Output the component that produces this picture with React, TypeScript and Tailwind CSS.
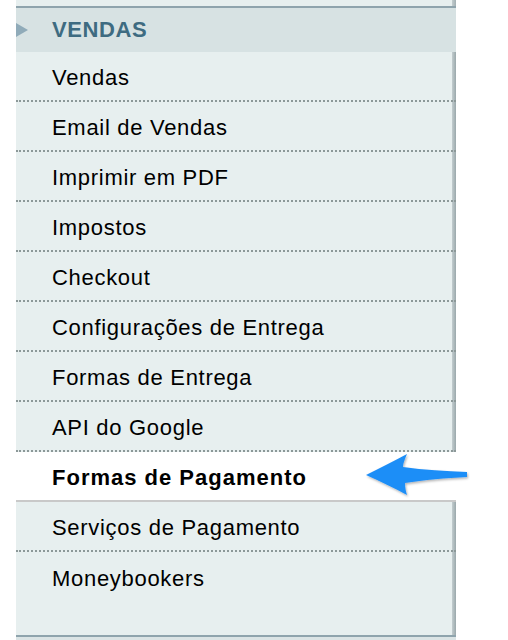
import React from 'react';

const items = [
  'Vendas',
  'Email de Vendas',
  'Imprimir em PDF',
  'Impostos',
  'Checkout',
  'Configurações de Entrega',
  'Formas de Entrega',
  'API do Google',
  'Formas de Pagamento',
  'Serviços de Pagamento',
  'Moneybookers',
];

const active = 'Formas de Pagamento';

const App: React.FC = () => {
  return (
    <div
      className="relative w-[508px] h-[640px] overflow-hidden bg-white"
      style={{ fontFamily: '"Liberation Sans", Arial, Helvetica, sans-serif' }}
    >
      <div className="ml-[16px] w-[440px] flex flex-col">
        {/* top strip */}
        <div className="h-[6px] bg-[linear-gradient(to_right,#e7efef_436px,#c3cdcf_436px,#a3b0b3_440px)]" />

        {/* section header */}
        <div className="relative h-[46px] border-t-2 border-[#8fa4ad] bg-[#d7e2e3] flex items-center pl-[36px]">
          <span className="absolute left-0 top-[15px] w-0 h-0 border-y-[7px] border-y-transparent border-l-[12px] border-l-[#90abb9]" />
          <span className="text-[22px] font-bold tracking-[0.6px] text-[#3e6b81] leading-none">VENDAS</span>
        </div>

        {/* items */}
        {items.map((item, i) => {
          const isActive = item === active;
          const last = i === items.length - 1;
          return (
            <div
              key={item}
              className={
                isActive
                  ? 'h-[50px] bg-white border-b-2 border-solid border-[#c9c9c9] flex items-center pl-[36px] pt-[2px]'
                  : last
                  ? 'h-[48px] bg-[linear-gradient(to_right,#e7efef_436px,#c3cdcf_436px,#9aa8ab_440px)] flex items-center pl-[36px] pt-[4px]'
                  : 'h-[50px] bg-[linear-gradient(to_right,#e7efef_436px,#c3cdcf_436px,#9aa8ab_440px)] border-b-2 border-dotted border-[#8c9898] flex items-center pl-[36px] pt-[2px]'
              }
            >
              <span
                className={
                  isActive
                    ? 'text-[22px] font-bold tracking-[1px] text-black'
                    : 'text-[22px] tracking-[0.7px] text-black'
                }
              >
                {item}
              </span>
            </div>
          );
        })}

        {/* bottom filler */}
        <div className="h-[35px] bg-[linear-gradient(to_right,#e7efef_436px,#c3cdcf_436px,#9aa8ab_440px)]" />
        <div className="h-[2px] bg-[#8fa4ad]" />
        <div className="h-[4px] bg-[#dbe4e5]" />
      </div>

      {/* pointer arrow */}
      <svg
        className="absolute left-[362px] top-[450px]"
        width="110"
        height="52"
        viewBox="0 0 110 52"
      >
        <defs>
          <filter id="s" x="-10%" y="-20%" width="130%" height="150%">
            <feDropShadow dx="1" dy="1.5" stdDeviation="1.2" floodColor="#000" floodOpacity="0.3" />
          </filter>
        </defs>
        <path
          d="M4 25 C18 18 32 11 45 4 C43 9 41 13 41 17 C62 20 84 21 105 22 L105 27 C84 28 62 30 43 33 C43 38 44 42 45 45 C32 38 18 31 4 25 Z"
          fill="#1f8ef7"
          filter="url(#s)"
        />
      </svg>
    </div>
  );
};

export default App;
